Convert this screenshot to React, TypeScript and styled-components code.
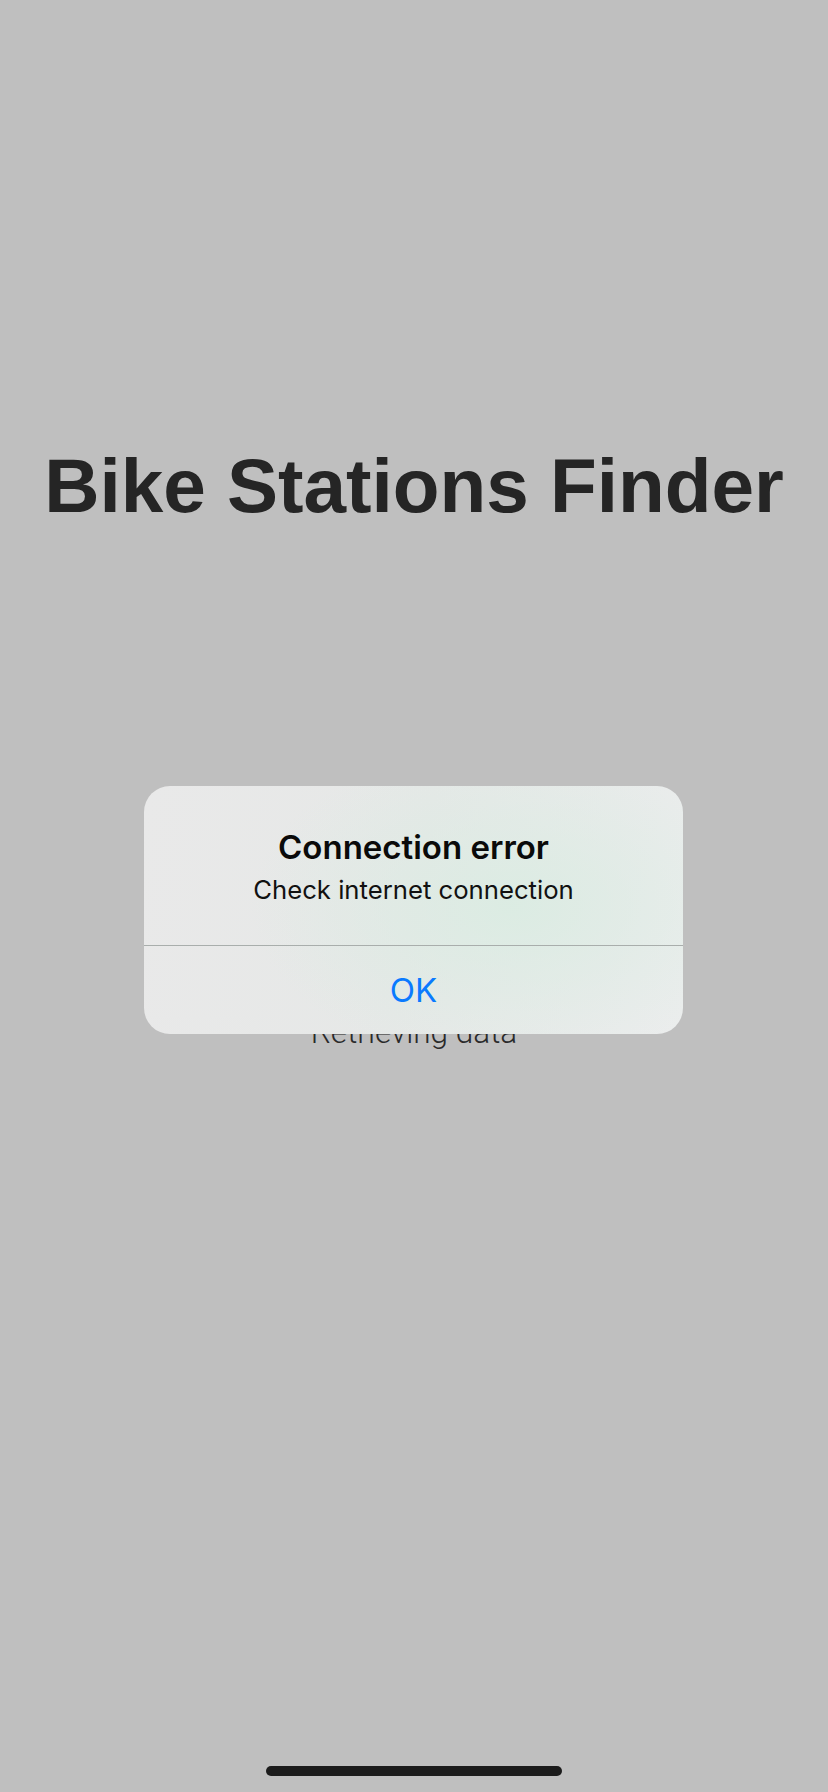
import React from "react";
import styled, { createGlobalStyle } from "styled-components";

const GlobalStyle = createGlobalStyle`
  html, body {
    margin: 0;
    padding: 0;
    background: #bfbfbf;
  }
  #root {
    min-height: 1792px;
  }
`;

const Screen = styled.div`
  position: relative;
  width: 828px;
  height: 1792px;
  background: #bfbfbf;
  display: flex;
  flex-direction: column;
  align-items: center;
  overflow: hidden;
`;

const Title = styled.h1`
  margin: 448px 0 0;
  font-family: "Liberation Sans", Arial, sans-serif;
  font-weight: 700;
  font-size: 76.5px;
  line-height: 1;
  color: #252525;
`;

const Status = styled.div`
  margin-top: 492px;
  font-family: Roboto, "Liberation Sans", sans-serif;
  font-weight: 300;
  font-size: 31.5px;
  line-height: 1;
  color: #2a2a2a;
`;

const Spacer = styled.div`
  flex: 1;
`;

const HomeIndicator = styled.div`
  width: 296px;
  height: 10px;
  border-radius: 5px;
  background: #1c1c1c;
  margin-bottom: 16px;
`;

const Alert = styled.div`
  position: absolute;
  left: 144px;
  top: 786px;
  width: 539px;
  height: 248px;
  border-radius: 26px;
  overflow: hidden;
  display: flex;
  flex-direction: column;
  background:
    radial-gradient(ellipse 260px 160px at 68% 48%, rgba(218, 236, 226, 0.9), rgba(218, 236, 226, 0) 100%),
    linear-gradient(100deg, #e9e9e9 0%, #e6e8e7 50%, #ebeded 100%);
`;

const AlertBody = styled.div`
  height: 160px;
  box-sizing: border-box;
  padding-top: 41px;
  display: flex;
  flex-direction: column;
  align-items: center;
  border-bottom: 1px solid #a9aeac;
`;

const AlertTitle = styled.div`
  font-family: Inter, "Noto Sans", sans-serif;
  font-weight: 600;
  font-size: 33px;
  line-height: 40px;
  color: #0a0a0a;
`;

const AlertMessage = styled.div`
  margin-top: 7px;
  font-family: Inter, "Noto Sans", sans-serif;
  font-weight: 400;
  font-size: 25.7px;
  line-height: 32px;
  color: #111;
`;

const AlertButton = styled.button`
  flex: 1;
  border: none;
  background: transparent;
  font-family: Inter, "Noto Sans", sans-serif;
  font-weight: 400;
  font-size: 33px;
  color: #0a7aff;
  display: flex;
  align-items: center;
  justify-content: center;
  padding: 0;
  cursor: pointer;
`;

export default function App() {
  return (
    <>
      <GlobalStyle />
      <Screen>
        <Title>Bike Stations Finder</Title>
        <Status>Retrieving data</Status>
        <Spacer />
        <HomeIndicator />
        <Alert>
          <AlertBody>
            <AlertTitle>Connection error</AlertTitle>
            <AlertMessage>Check internet connection</AlertMessage>
          </AlertBody>
          <AlertButton>OK</AlertButton>
        </Alert>
      </Screen>
    </>
  );
}
